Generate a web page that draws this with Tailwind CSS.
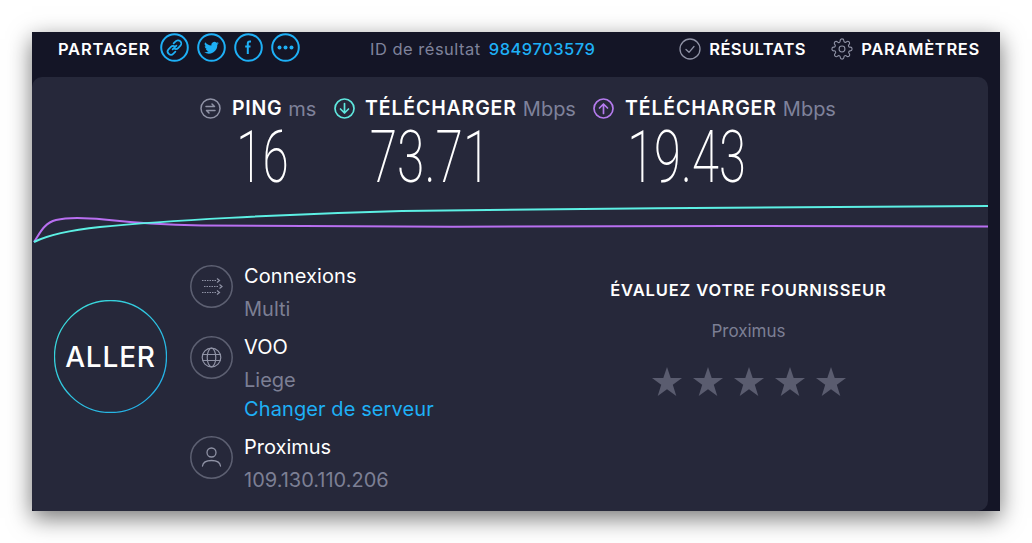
<!DOCTYPE html>
<html lang="fr">
<head>
<meta charset="UTF-8">
<title>Speedtest</title>
<script src="https://cdn.jsdelivr.net/npm/@tailwindcss/browser@4"></script>
</head>
<body class="bg-white overflow-hidden font-['Inter',sans-serif]">
<div class="w-[1032px] h-[543px] pt-[32px] pl-[32px]">
  <div class="w-[968px] h-[479px] bg-[#141526] shadow-[0_7px_22px_rgba(0,0,0,0.55)] flex flex-col">
    <!-- top bar -->
    <header class="h-[31px] mb-[14px] flex items-center pl-[26px] pr-[20px] shrink-0">
      <span class="text-white text-[16.5px] font-semibold tracking-[0.8px] w-[102px] mt-[3px] whitespace-nowrap">PARTAGER</span>
      <div class="flex gap-[8px] text-[#1eb0f6]">
        <svg class="w-[29px] h-[29px]" viewBox="0 0 29 29" fill="none" stroke="currentColor" stroke-width="2"><circle cx="14.5" cy="14.5" r="13.3"/><path d="M12.6 16.4l3.8-3.8M13.6 10.4l2-2a3.1 3.1 0 0 1 4.9 4.3l-2.4 2.4a3.1 3.1 0 0 1-3.9.4M15.4 18.6l-2 2a3.1 3.1 0 0 1-4.9-4.3l2.4-2.4a3.1 3.1 0 0 1 3.9-.4" stroke-width="1.7" stroke-linecap="round"/></svg>
        <svg class="w-[29px] h-[29px]" viewBox="0 0 29 29" fill="none" stroke="currentColor" stroke-width="2"><circle cx="14.5" cy="14.5" r="13.3"/><path transform="translate(6.5 6.5) scale(.667)" fill="currentColor" stroke="none" d="M23 5.600c-.8.4-1.700.6-2.600.7.900-.6 1.600-1.400 2-2.500-.9.5-1.900.9-2.900 1.100a4.500 4.500 0 0 0-7.700 4.100C8 8.800 4.700 7 2.500 4.200a4.500 4.500 0 0 0 1.400 6c-.7 0-1.400-.2-2-.6 0 2.200 1.500 4.100 3.600 4.500-.7.2-1.400.2-2 .1.600 1.800 2.200 3.100 4.200 3.100A9 9 0 0 1 1 19.200 12.800 12.800 0 0 0 20.700 7.800c.9-.6 1.700-1.400 2.300-2.200z"/></svg>
        <svg class="w-[29px] h-[29px]" viewBox="0 0 29 29" fill="none" stroke="currentColor" stroke-width="2"><circle cx="14.5" cy="14.5" r="13.3"/><path d="M17 8.500h-1.200c-1.300 0-2 .8-2 2.100V21M11.200 13.500h5.300" stroke-width="2"/></svg>
        <svg class="w-[29px] h-[29px]" viewBox="0 0 29 29" fill="none" stroke="currentColor" stroke-width="2"><circle cx="14.5" cy="14.5" r="13.3"/><circle cx="8.500" cy="14.500" r="2" fill="currentColor" stroke="none"/><circle cx="14.500" cy="14.500" r="2" fill="currentColor" stroke="none"/><circle cx="20.500" cy="14.500" r="2" fill="currentColor" stroke="none"/></svg>
      </div>
      <div class="ml-[70px] flex items-center gap-[8px] text-[16.5px] tracking-[0.5px] mt-[3px]">
        <span class="text-[#7f829b]">ID de résultat</span>
        <span class="text-[#1eb0f6] font-medium">9849703579</span>
      </div>
      <div class="ml-auto flex items-center mt-[3px]">
        <svg class="w-[22px] h-[22px] mr-[8px]" viewBox="0 0 22 22" fill="none" stroke="#8f92a5" stroke-width="1.300"><circle cx="11" cy="11" r="10"/><path d="M7 11.500l3 2.800 5-5.800" stroke-linecap="round" stroke-linejoin="round"/></svg>
        <span class="text-white text-[16.5px] font-semibold tracking-[0.4px] w-[122px]">RÉSULTATS</span>
        <svg class="w-[22px] h-[22px] mr-[8px]" viewBox="0 0 24 24" fill="none" stroke="#8f92a5" stroke-width="1.200" stroke-linejoin="round"><circle cx="12" cy="12" r="3.200"/><path d="M19.400 15a1.650 1.650 0 0 0 .33 1.820l.06.06a2 2 0 1 1-2.830 2.830l-.06-.06a1.650 1.650 0 0 0-2.800 1.170V21a2 2 0 0 1-4 0v-.09a1.650 1.650 0 0 0-2.800-1.170l-.06.06a2 2 0 1 1-2.830-2.830l.06-.06A1.650 1.650 0 0 0 3.090 14H3a2 2 0 0 1 0-4h.09a1.650 1.650 0 0 0 1.170-2.800l-.06-.06a2 2 0 1 1 2.830-2.830l.06.06A1.650 1.650 0 0 0 10 3.090V3a2 2 0 0 1 4 0v.09a1.650 1.650 0 0 0 2.800 1.170l.06-.06a2 2 0 1 1 2.830 2.830l-.06.06A1.650 1.650 0 0 0 20.910 10H21a2 2 0 0 1 0 4h-.09a1.650 1.650 0 0 0-1.510 1z"/></svg>
        <span class="text-white text-[16.5px] font-semibold tracking-[0.7px]">PARAMÈTRES</span>
      </div>
    </header>
    <!-- panel -->
    <main class="w-[956px] h-[434px] bg-[#26283a] rounded-t-[10px] rounded-br-[10px] rounded-bl-[4px] flex flex-col overflow-hidden">
      <!-- metrics -->
      <section class="flex pl-[168px] pt-[20px] h-[128px] shrink-0">
        <div class="w-[134px]">
          <div class="flex items-center h-[22px]">
            <svg class="w-[21px] h-[21px] mr-[11px]" viewBox="0 0 21 21" fill="none" stroke="#8f92a5" stroke-width="1.500"><circle cx="10.500" cy="10.500" r="9.500"/><path d="M6 8.500h8.500l-2.500-2.500M15 12.500H6.500l2.500 2.500" stroke-linecap="round" stroke-linejoin="round"/></svg>
            <span class="text-white text-[19.5px] font-semibold tracking-[0.7px] mt-[1px]">PING</span>
            <span class="text-[#7f829b] text-[20px] ml-[6px] mt-[1px]">ms</span>
          </div>
          <div class="text-white text-[72px] leading-[72px] font-[Roboto] font-extralight w-[125px] text-center mt-[3px] scale-x-[0.66]">16</div>
        </div>
        <div class="w-[259px]">
          <div class="flex items-center h-[22px]">
            <svg class="w-[21px] h-[21px] mr-[10px]" viewBox="0 0 21 21" fill="none" stroke="#5fe8de" stroke-width="1.700"><circle cx="10.500" cy="10.500" r="9.500"/><path d="M10.500 5.500v9.500M6.500 11l4 4 4-4" stroke-linecap="round" stroke-linejoin="round"/></svg>
            <span class="text-white text-[19.5px] font-semibold tracking-[0.85px] mt-[1px]">TÉLÉCHARGER</span>
            <span class="text-[#7f829b] text-[20px] ml-[6px] mt-[1px]">Mbps</span>
          </div>
          <div class="text-white text-[72px] leading-[72px] font-[Roboto] font-extralight w-[192px] text-center mt-[3px] scale-x-[0.69]">73.71</div>
        </div>
        <div class="w-[260px]">
          <div class="flex items-center h-[22px]">
            <svg class="w-[21px] h-[21px] mr-[11px]" viewBox="0 0 21 21" fill="none" stroke="#b57bee" stroke-width="1.700"><circle cx="10.500" cy="10.500" r="9.500"/><path d="M10.500 15.500V6M6.500 10l4-4 4 4" stroke-linecap="round" stroke-linejoin="round"/></svg>
            <span class="text-white text-[19.5px] font-semibold tracking-[0.85px] mt-[1px]">TÉLÉCHARGER</span>
            <span class="text-[#7f829b] text-[20px] ml-[6px] mt-[1px]">Mbps</span>
          </div>
          <div class="text-white text-[72px] leading-[72px] font-[Roboto] font-extralight w-[187px] text-center mt-[3px] scale-x-[0.68]">19.43</div>
        </div>
      </section>
      <!-- graph -->
      <svg class="w-[956px] h-[50px] shrink-0 block" viewBox="0 0 956 50" fill="none" stroke-width="2">
        <path stroke="#b86ff0" d="M2 37C8 28 12 18 24 15C34 12.500 52 12.500 72 14.500C95 17 125 19.500 170 20.500C300 22 600 22 700 21C800 22 900 21.500 956 21.500"/>
        <path stroke="#5cf0e4" d="M2 37C12 32 30 26 68 22C130 16 250 9 370 6C550 3.500 800 1.500 956 1"/>
      </svg>
      <!-- bottom -->
      <section class="flex flex-1">
        <div class="w-[158px] pl-[22px] pt-[45px] shrink-0">
          <div class="relative w-[113px] h-[113px] flex items-center justify-center">
            <svg class="absolute inset-0" width="113" height="113" viewBox="0 0 113 113" fill="none"><defs><linearGradient id="go" x1="0" y1="0" x2="1" y2="1"><stop offset="0" stop-color="#3ee0d8"/><stop offset="1" stop-color="#1fa8e8"/></linearGradient></defs><circle cx="56.500" cy="56.500" r="56" stroke="url(#go)" stroke-width="1.300"/></svg>
            <span class="text-white text-[28px] font-medium tracking-[0.8px]">ALLER</span>
          </div>
        </div>
        <div class="w-[370px] shrink-0 pt-[10px]">
          <div class="flex h-[71px]">
            <svg class="w-[43px] h-[43px] mr-[11px] shrink-0" viewBox="0 0 43 43" fill="none" stroke="#5d6072" stroke-width="1.500"><circle cx="21.500" cy="21.500" r="20.700"/><path stroke="#8f92a5" stroke-width="1" stroke-dasharray="1.500 1" d="M12 15.500h15M14 21.500h15M12 27.500h15"/><path stroke="#8f92a5" stroke-width="1.200" d="M27 13.500l2.500 2-2.500 2M29.500 19.500l2.500 2-2.500 2M27 25.500l2.500 2-2.500 2"/></svg>
            <div>
              <div class="text-white text-[20px] tracking-[0.1px] leading-[22px]">Connexions</div>
              <div class="text-[#7c7f94] text-[20px] leading-[22px] mt-[11px]">Multi</div>
            </div>
          </div>
          <div class="flex h-[100px]">
            <svg class="w-[43px] h-[43px] mr-[11px] shrink-0" viewBox="0 0 43 43" fill="none" stroke="#5d6072" stroke-width="1.500"><circle cx="21.500" cy="21.500" r="20.700"/><g stroke="#8f92a5" stroke-width="1.200"><circle cx="21.500" cy="21.500" r="9.300"/><ellipse cx="21.500" cy="21.500" rx="4.300" ry="9.300"/><path d="M12.500 18.500h18M12.500 24.500h18"/></g></svg>
            <div>
              <div class="text-white text-[20px] leading-[22px]">VOO</div>
              <div class="text-[#7c7f94] text-[20px] leading-[22px] mt-[11px]">Liege</div>
              <div class="text-[#1eb0f6] text-[20px] tracking-[0.1px] leading-[22px] mt-[7px]">Changer de serveur</div>
            </div>
          </div>
          <div class="flex">
            <svg class="w-[43px] h-[43px] mr-[11px] shrink-0" viewBox="0 0 43 43" fill="none" stroke="#5d6072" stroke-width="1.500"><circle cx="21.500" cy="21.500" r="20.700"/><g stroke="#8f92a5" stroke-width="1.300"><circle cx="21.500" cy="16.500" r="4.500"/><path d="M12.500 30c.5-4 4-5.500 9-5.500s8.500 1.500 9 5.500" stroke-linecap="round"/></g></svg>
            <div>
              <div class="text-white text-[20px] leading-[22px]">Proximus</div>
              <div class="text-[#7c7f94] text-[20px] leading-[22px] mt-[11px]">109.130.110.206</div>
            </div>
          </div>
        </div>
        <div class="w-[297px] ml-[40px] pt-[25px] flex flex-col items-center shrink-0">
          <div class="text-white text-[16.5px] font-semibold tracking-[0.85px] leading-[20px] whitespace-nowrap">ÉVALUEZ VOTRE FOURNISSEUR</div>
          <div class="text-[#7c7f94] text-[17px] leading-[20px] mt-[21px]">Proximus</div>
          <div class="flex gap-[11px] mt-[26px] text-[#5a5c6f]">
            <svg class="w-[30px] h-[30px]" viewBox="0 0 30 30" fill="currentColor"><path d="M15 0l3.700 11H30l-9.200 6.800L24.300 29 15 22.200 5.700 29l3.500-11.200L0 11h11.300z"/></svg>
            <svg class="w-[30px] h-[30px]" viewBox="0 0 30 30" fill="currentColor"><path d="M15 0l3.700 11H30l-9.200 6.800L24.300 29 15 22.200 5.700 29l3.500-11.200L0 11h11.300z"/></svg>
            <svg class="w-[30px] h-[30px]" viewBox="0 0 30 30" fill="currentColor"><path d="M15 0l3.700 11H30l-9.200 6.800L24.300 29 15 22.200 5.700 29l3.500-11.200L0 11h11.300z"/></svg>
            <svg class="w-[30px] h-[30px]" viewBox="0 0 30 30" fill="currentColor"><path d="M15 0l3.700 11H30l-9.200 6.800L24.300 29 15 22.200 5.700 29l3.500-11.200L0 11h11.300z"/></svg>
            <svg class="w-[30px] h-[30px]" viewBox="0 0 30 30" fill="currentColor"><path d="M15 0l3.700 11H30l-9.200 6.800L24.300 29 15 22.200 5.700 29l3.500-11.200L0 11h11.300z"/></svg>
          </div>
        </div>
      </section>
    </main>
  </div>
</div>
</body>
</html>
